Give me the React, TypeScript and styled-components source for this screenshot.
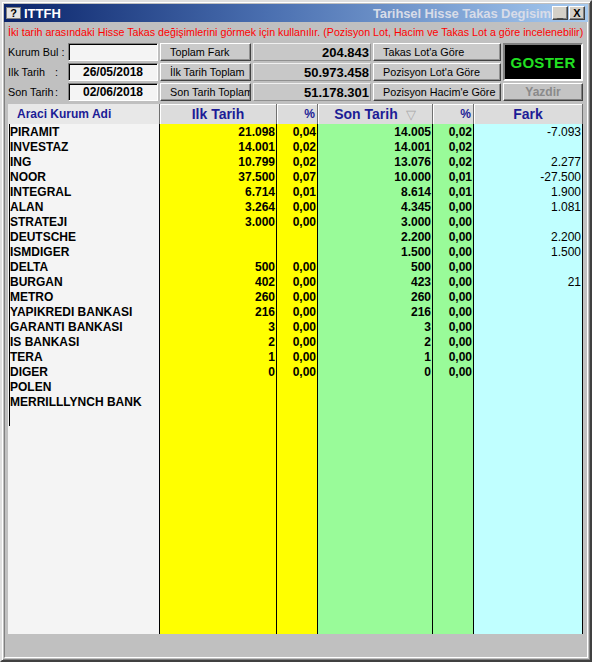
import React from "react";
import styled, { createGlobalStyle } from "styled-components";

const Global = createGlobalStyle`
  html, body { margin: 0; padding: 0; background: #c0c0c0; }
  body { font-family: "Liberation Sans", Arial, sans-serif; }
`;

const FONT = `"Liberation Sans", Arial, sans-serif`;

const Window = styled.div`
  width: 592px;
  height: 662px;
  box-sizing: border-box;
  background: #c0c0c0;
  border: 2px solid;
  border-color: #dfdfdf #404040 #404040 #dfdfdf;
  box-shadow: inset 1px 1px 0 #fff, inset -1px -1px 0 #808080;
  padding: 2px;
  display: flex;
  flex-direction: column;
  font-family: ${FONT};
  overflow: hidden;
`;

const TitleBar = styled.div`
  height: 18px;
  flex: none;
  background: linear-gradient(to right, #0a246a 0%, #4a6fb0 45%, #a6caf0 100%);
  display: flex;
  align-items: center;
  padding: 0 2px;
`;

const HelpIcon = styled.span`
  width: 15px;
  height: 12px;
  box-sizing: border-box;
  background: #e4e4e4;
  border: 1px solid #808080;
  color: #000;
  font: bold 11px ${FONT};
  display: flex;
  align-items: center;
  justify-content: center;
`;

const TitleText = styled.span`
  margin-left: 3px;
  color: #fff;
  font: bold 13px ${FONT};
`;

const RightTitle = styled.span`
  margin-left: auto;
  white-space: nowrap;
  color: #d8dce8;
  font: bold 13px ${FONT};
  letter-spacing: -0.1px;
`;

const WinButtons = styled.div`
  display: flex;
  gap: 1px;
  margin-left: 1px;
  margin-right: 1px;
`;

const WinButton = styled.span`
  width: 16px;
  height: 14px;
  box-sizing: border-box;
  background: #d4d0c8;
  border: 1px solid;
  border-color: #fff #404040 #404040 #fff;
  box-shadow: inset -1px -1px 0 #808080;
  color: #000;
  font: bold 11px ${FONT};
  display: flex;
  align-items: center;
  justify-content: center;
  line-height: 1;
`;

const Client = styled.div`
  flex: 1;
  display: flex;
  flex-direction: column;
  padding: 0 3px;
  border-left: 1px solid #808080;
  border-right: 1px solid #fff;
  border-bottom: 1px solid #fff;
`;

const Message = styled.div`
  height: 21px;
  line-height: 21px;
  color: #ff0000;
  font-size: 10.7px;
  white-space: nowrap;
  overflow: hidden;
`;

const Controls = styled.div`
  display: grid;
  grid-template-columns: 58px 90px 91px 118px 128px 80px;
  grid-template-rows: 18px 18px 18px;
  column-gap: 2px;
  row-gap: 2px;
`;

const Label = styled.div`
  display: flex;
  align-items: center;
  font-size: 10.8px;
  color: #000;
  white-space: nowrap;
`;

const LabelName = styled.span`
  min-width: 47px;
`;

const Input = styled.div`
  box-sizing: border-box;
  background: #f4f4f4;
  border: 1px solid;
  border-color: #808080 #fff #fff #808080;
  box-shadow: inset 1px 1px 0 #000;
  font: bold 12px ${FONT};
  display: flex;
  align-items: center;
  justify-content: center;
`;

const Button = styled.div`
  box-sizing: border-box;
  background: #cacaca;
  border: 1px solid;
  border-color: #fff #404040 #404040 #fff;
  box-shadow: inset -1px -1px 0 #909090;
  font-size: 10.8px;
  color: #000;
  display: flex;
  align-items: center;
  padding-left: 9px;
  white-space: nowrap;
  overflow: hidden;
`;

const ValueCell = styled.div`
  box-sizing: border-box;
  background: #c8c8c8;
  border: 1px solid;
  border-color: #f0f0f0 #909090 #909090 #f0f0f0;
  font: bold 13px ${FONT};
  display: flex;
  align-items: center;
  justify-content: flex-end;
  padding-right: 1px;
`;

const GoButton = styled.div`
  grid-column: 6;
  grid-row: 1 / span 2;
  box-sizing: border-box;
  background: #000;
  border: 2px solid;
  border-color: #808080 #fff #fff #808080;
  color: #22e022;
  font: bold 15px ${FONT};
  display: flex;
  align-items: center;
  justify-content: center;
  letter-spacing: 0.3px;
`;

const PrintButton = styled.div`
  grid-column: 6;
  grid-row: 3;
  box-sizing: border-box;
  background: #c4c4c4;
  border: 1px solid;
  border-color: #fff #404040 #404040 #fff;
  box-shadow: inset -1px -1px 0 #808080;
  color: #8a8a8a;
  font: bold 12px ${FONT};
  display: flex;
  align-items: center;
  justify-content: center;
`;

const Table = styled.div`
  margin-top: 3px;
  display: grid;
  grid-template-columns: 151px 117px 41px 115px 41px 110px;
  grid-template-rows: 20px 510px;
`;

const HeaderCell = styled.div<{ $align?: string; $first?: boolean; $last?: boolean }>`
  box-sizing: border-box;
  background: ${(p) => (p.$first ? "#e8e8e8" : "#dcdcdc")};
  border-left: ${(p) => (p.$first ? "none" : "1px solid #707070")};
  border-right: ${(p) => (p.$last ? "1px solid #707070" : "none")};
  box-shadow: ${(p) => (p.$first ? "none" : "inset 1px 1px 0 #fff")};
  color: #1c1c96;
  display: flex;
  align-items: center;
  justify-content: ${(p) => p.$align || "center"};
  font: bold 14px ${FONT};
  white-space: nowrap;
  overflow: hidden;
`;

const SmallHead = styled.span<{ $pad?: number }>`
  font-size: 12px;
  padding-left: ${(p) => p.$pad || 0}px;
  padding-right: 2px;
`;

const SortMark = styled.span`
  color: #a8a8a8;
  font-size: 13px;
  font-weight: normal;
  margin-left: 8px;
`;

const Column = styled.div<{ $bg: string; $first?: boolean; $last?: boolean }>`
  box-sizing: border-box;
  background: ${(p) => p.$bg};
  border-left: ${(p) => (p.$first ? "none" : "1px solid #000")};
  border-right: ${(p) => (p.$last ? "1px solid #000" : "none")};
  display: flex;
  flex-direction: column;
  padding-top: 1px;
  overflow: hidden;
`;

const NameList = styled.div`
  margin-left: 1px;
  margin-top: -1px;
  padding-top: 1px;
  border-left: 1px solid #000;
  padding-bottom: 16px;
  display: flex;
  flex-direction: column;
`;

const NameRow = styled.div`
  height: 15px;
  line-height: 15px;
  font: bold 12px ${FONT};
  color: #000;
  white-space: nowrap;
  overflow: hidden;
`;

const NumRow = styled.div<{ $regular?: boolean }>`
  height: 15px;
  line-height: 15px;
  font: ${(p) => (p.$regular ? "normal" : "bold")} 12px ${FONT};
  color: #000;
  text-align: right;
  padding-right: 1px;
  white-space: nowrap;
`;

type Row = [string, string, string, string, string, string];

const rows: Row[] = [
  ["PIRAMIT", "21.098", "0,04", "14.005", "0,02", "-7.093"],
  ["INVESTAZ", "14.001", "0,02", "14.001", "0,02", ""],
  ["ING", "10.799", "0,02", "13.076", "0,02", "2.277"],
  ["NOOR", "37.500", "0,07", "10.000", "0,01", "-27.500"],
  ["INTEGRAL", "6.714", "0,01", "8.614", "0,01", "1.900"],
  ["ALAN", "3.264", "0,00", "4.345", "0,00", "1.081"],
  ["STRATEJI", "3.000", "0,00", "3.000", "0,00", ""],
  ["DEUTSCHE", "", "", "2.200", "0,00", "2.200"],
  ["ISMDIGER", "", "", "1.500", "0,00", "1.500"],
  ["DELTA", "500", "0,00", "500", "0,00", ""],
  ["BURGAN", "402", "0,00", "423", "0,00", "21"],
  ["METRO", "260", "0,00", "260", "0,00", ""],
  ["YAPIKREDI BANKASI", "216", "0,00", "216", "0,00", ""],
  ["GARANTI BANKASI", "3", "0,00", "3", "0,00", ""],
  ["IS BANKASI", "2", "0,00", "2", "0,00", ""],
  ["TERA", "1", "0,00", "1", "0,00", ""],
  ["DIGER", "0", "0,00", "0", "0,00", ""],
  ["POLEN", "", "", "", "", ""],
  ["MERRILLLYNCH BANK", "", "", "", "", ""],
];

const numCols: { idx: number; bg: string; regular?: boolean; last?: boolean }[] = [
  { idx: 1, bg: "#ffff00" },
  { idx: 2, bg: "#ffff00" },
  { idx: 3, bg: "#99fb99" },
  { idx: 4, bg: "#99fb99" },
  { idx: 5, bg: "#c0ffff", regular: true, last: true },
];

export default function App() {
  return (
    <>
      <Global />
      <Window>
        <TitleBar>
          <HelpIcon>?</HelpIcon>
          <TitleText>ITTFH</TitleText>
          <RightTitle>Tarihsel Hisse Takas Degisim</RightTitle>
          <WinButtons>
            <WinButton>_</WinButton>
            <WinButton>X</WinButton>
          </WinButtons>
        </TitleBar>
        <Client>
          <Message>
            İki tarih arasındaki Hisse Takas değişimlerini görmek için kullanılır. (Pozisyon Lot, Hacim ve Takas Lot a göre incelenebilir)
          </Message>
          <Controls>
            <Label>Kurum Bul :</Label>
            <Input />
            <Button>Toplam Fark</Button>
            <ValueCell>204.843</ValueCell>
            <Button>Takas Lot'a Göre</Button>
            <GoButton>GOSTER</GoButton>

            <Label>
              <LabelName>Ilk Tarih</LabelName>:
            </Label>
            <Input>26/05/2018</Input>
            <Button>İlk Tarih Toplam</Button>
            <ValueCell>50.973.458</ValueCell>
            <Button>Pozisyon Lot'a Göre</Button>

            <Label>
              <LabelName>Son Tarih</LabelName>:
            </Label>
            <Input>02/06/2018</Input>
            <Button>Son Tarih Toplam</Button>
            <ValueCell>51.178.301</ValueCell>
            <Button>Pozisyon Hacim'e Göre</Button>
            <PrintButton>Yazdir</PrintButton>
          </Controls>
          <Table>
            <HeaderCell $first $align="flex-start">
              <SmallHead $pad={9}>Araci Kurum Adi</SmallHead>
            </HeaderCell>
            <HeaderCell>Ilk Tarih</HeaderCell>
            <HeaderCell $align="flex-end">
              <SmallHead>%</SmallHead>
            </HeaderCell>
            <HeaderCell>
              Son Tarih<SortMark>▽</SortMark>
            </HeaderCell>
            <HeaderCell $align="flex-end">
              <SmallHead>%</SmallHead>
            </HeaderCell>
            <HeaderCell $last>Fark</HeaderCell>

            <Column $bg="#f4f4f4" $first>
              <NameList>
                {rows.map((r) => (
                  <NameRow key={r[0]}>{r[0]}</NameRow>
                ))}
              </NameList>
            </Column>
            {numCols.map((c) => (
              <Column key={c.idx} $bg={c.bg} $last={c.last}>
                {rows.map((r) => (
                  <NumRow key={r[0]} $regular={c.regular}>
                    {r[c.idx]}
                  </NumRow>
                ))}
              </Column>
            ))}
          </Table>
        </Client>
      </Window>
    </>
  );
}
